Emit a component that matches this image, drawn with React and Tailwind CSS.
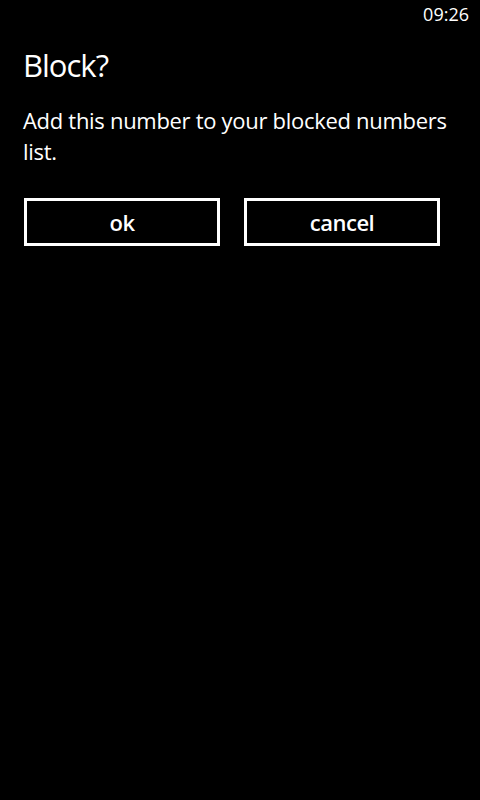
export default function App() {
  return (
    <div className="w-[480px] h-[800px] bg-black text-white overflow-hidden" style={{ fontFamily: '"Open Sans", "Noto Sans", sans-serif' }}>
      <div className="h-[32px] flex justify-end items-start pr-[11px] pt-[2px]">
        <span className="text-[18px] leading-[24px]">09:26</span>
      </div>
      <div className="pl-[23px] pr-[20px]">
        <h1 className="text-[31px] leading-[40px] mt-[13px] tracking-[-1px]">Block?</h1>
        <p className="text-[22px] leading-[31px] mt-[20px] tracking-[-0.3px]">Add this number to your blocked numbers list.</p>
        <div className="flex gap-[24px] mt-[31px] pl-[1px]">
          <button className="w-[196px] h-[48px] border-[3px] border-white text-[22px] font-semibold tracking-[-0.5px] flex items-center justify-center">ok</button>
          <button className="w-[196px] h-[48px] border-[3px] border-white text-[22px] font-semibold tracking-[-0.5px] flex items-center justify-center">cancel</button>
        </div>
      </div>
    </div>
  );
}
